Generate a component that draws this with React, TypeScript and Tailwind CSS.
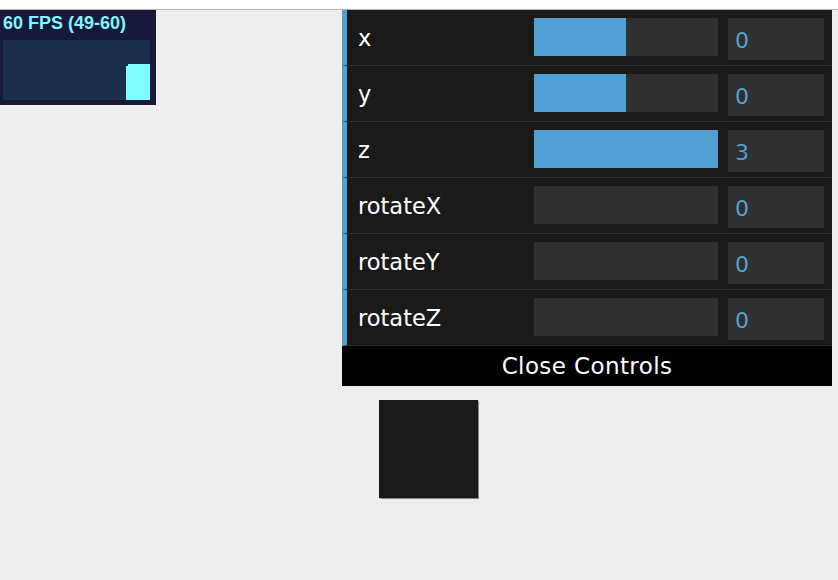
import { FunctionComponent } from "react";

type Control = {
  label: string;
  value: number;
  fill: number; // 0..1 share of the slider
};

const controls: Control[] = [
  { label: "x", value: 0, fill: 0.5 },
  { label: "y", value: 0, fill: 0.5 },
  { label: "z", value: 3, fill: 1 },
  { label: "rotateX", value: 0, fill: 0 },
  { label: "rotateY", value: 0, fill: 0 },
  { label: "rotateZ", value: 0, fill: 0 },
];

const StatsPanel: FunctionComponent = () => {
  return (
    <div className="w-[156px] h-[95px] bg-[#18183a] flex flex-col shrink-0">
      <div className="h-[30px] pl-[3px] pt-[1px] text-[18px] leading-[24px] font-bold text-[#80f6ff] font-['Liberation_Sans',Arial,sans-serif]">
        60 FPS (49-60)
      </div>
      <div className="ml-[3px] w-[147px] h-[60px] bg-[#1c2f4a] flex items-end justify-end">
        <div className="w-[24px] h-[36px] bg-[#80ffff] relative">
          <div className="absolute left-0 top-0 w-[2px] h-[2px] bg-[#1c2f4a]" />
        </div>
      </div>
    </div>
  );
};

const Row: FunctionComponent<{ c: Control }> = ({ c }) => {
  return (
    <div className="h-[56px] flex items-start border-l-[5px] border-l-[#4f9fd3] border-b border-b-[#2c2c2c] bg-[#1a1a1a]">
      <div className="w-[187px] h-[55px] pl-[11px] pt-[3px] flex items-center text-[22.5px] text-white">
        {c.label}
      </div>
      <div className="mt-[8px] w-[184px] h-[38px] bg-[#303030]">
        <div
          className="h-full bg-[#4f9fd3]"
          style={{ width: `${c.fill * 100}%` }}
        />
      </div>
      <div className="mt-[8px] ml-[10px] w-[96px] h-[42px] bg-[#303030] pl-[7px] pt-[2px] flex items-center text-[22px] text-[#4f9fd3]">
        {c.value}
      </div>
    </div>
  );
};

const Controls: FunctionComponent = () => {
  return (
    <div className="w-[490px] font-['DejaVu_Sans',sans-serif]">
      {controls.map((c) => (
        <Row key={c.label} c={c} />
      ))}
      <div className="h-[40px] bg-black text-white text-[23px] tracking-[0.4px] flex items-center justify-center">
        Close Controls
      </div>
    </div>
  );
};

export default function App() {
  return (
    <div className="w-[838px] h-[580px] bg-[#eeeeee] flex flex-col overflow-hidden">
      <div className="h-[10px] bg-white border-b border-b-[#b4b4b4] shrink-0" />
      <div className="flex flex-row items-start">
        <StatsPanel />
        <div className="ml-[186px] flex flex-col">
          <Controls />
          <div className="ml-[37px] mt-[14px] w-[99px] h-[98px] bg-[#1a1a1a] shadow-[0_0_1px_0.5px_rgba(26,26,26,0.5)]" />
        </div>
      </div>
    </div>
  );
}
